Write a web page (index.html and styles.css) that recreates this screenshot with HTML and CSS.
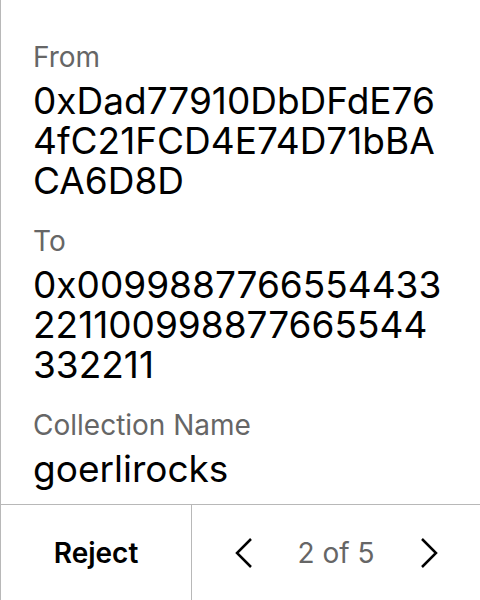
FILE: index.html
```html
<!DOCTYPE html>
<html>
<head>
<meta charset="utf-8">
<link rel="stylesheet" href="styles.css">
</head>
<body>
<div class="panel">
  <div class="details">
    <div class="field">
      <div class="label">From</div>
      <div class="value">0xDad77910DbDFdE764fC21FCD4E74D71bBACA6D8D</div>
    </div>
    <div class="field">
      <div class="label">To</div>
      <div class="value">0x0099887766554433221100998877665544332211</div>
    </div>
    <div class="field">
      <div class="label">Collection Name</div>
      <div class="value">goerlirocks</div>
    </div>
  </div>
  <div class="footer">
    <button class="reject">Reject</button>
    <div class="pager">
      <button class="arrow" aria-label="Previous">
        <svg width="20" height="32" viewBox="0 0 20 32"><path d="M17 2 L3 16 L17 30" fill="none" stroke="#000" stroke-width="2.5"/></svg>
      </button>
      <span class="count">2 of 5</span>
      <button class="arrow" aria-label="Next">
        <svg width="20" height="32" viewBox="0 0 20 32"><path d="M3 2 L17 16 L3 30" fill="none" stroke="#000" stroke-width="2.5"/></svg>
      </button>
    </div>
  </div>
</div>
</body>
</html>
```
FILE: styles.css
```css
html, body {
  margin: 0;
  padding: 0;
  background: #fff;
}
body {
  font-family: Inter, "Noto Sans", sans-serif;
  width: 480px;
  height: 600px;
  overflow: hidden;
}
.panel {
  border-left: 1px solid #b8b8b8;
  height: 600px;
  box-sizing: border-box;
  display: flex;
  flex-direction: column;
}
.details {
  padding: 41px 32px 15px 32px;
  display: flex;
  flex-direction: column;
  gap: 24px;
}
.field {
  display: flex;
  flex-direction: column;
  gap: 8px;
}
.label {
  font-size: 28px;
  line-height: 32px;
  color: #666;
}
.value {
  font-size: 37px;
  line-height: 40px;
  color: #000;
  word-break: break-all;
}
.footer {
  flex: 1;
  border-top: 1px solid #b8b8b8;
  display: grid;
  grid-template-columns: 191px 1fr;
}
.reject {
  border: none;
  border-right: 1px solid #b8b8b8;
  background: #fff;
  font-family: inherit;
  font-size: 28px;
  font-weight: 600;
  color: #000;
  padding: 0;
}
.pager {
  display: flex;
  align-items: center;
  justify-content: center;
  gap: 44px;
}
.arrow {
  border: none;
  background: none;
  padding: 0;
  display: flex;
}
.count {
  font-size: 28px;
  color: #666;
}
```
